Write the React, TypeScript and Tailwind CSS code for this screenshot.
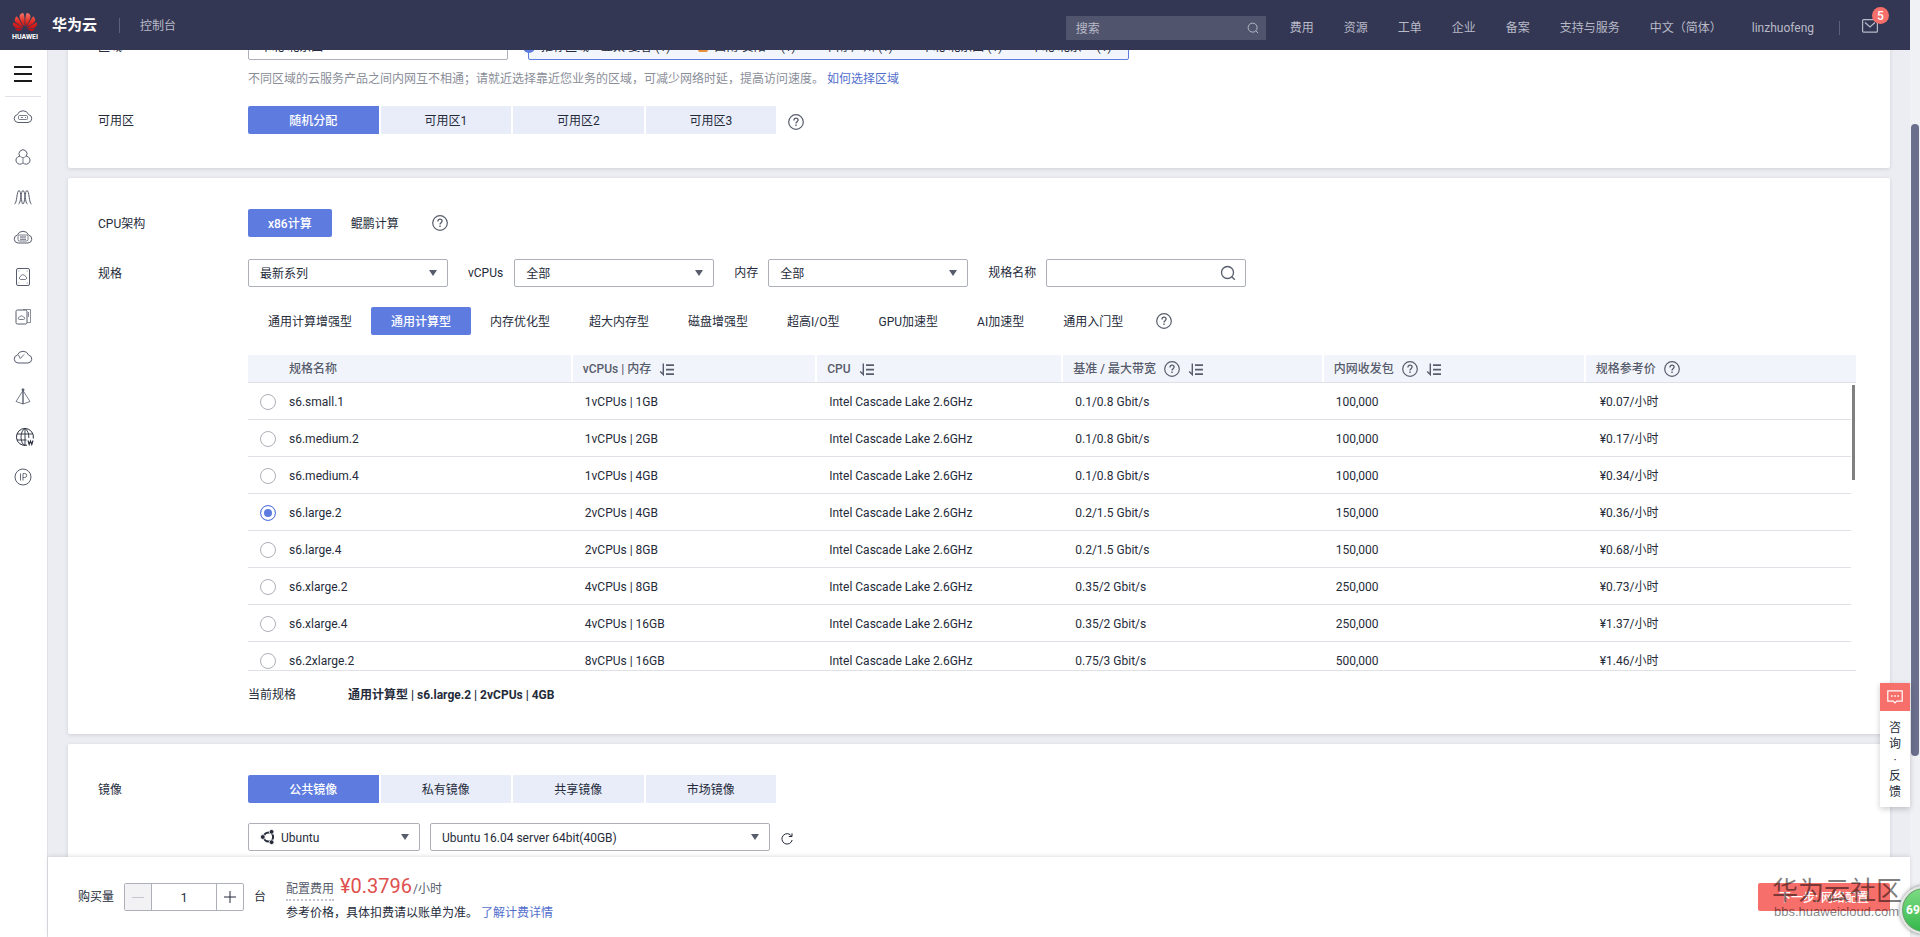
import { useState, type ReactNode } from "react";
import { SiHuawei } from "react-icons/si";

const regions = ["华南-广州 (1)", "华北-北京四 (1)", "华北-北京一 (1)"];
const zones = ["随机分配", "可用区1", "可用区2", "可用区3"];
const imageKinds = ["公共镜像", "私有镜像", "共享镜像", "市场镜像"];
const flavorKinds = [
  "通用计算增强型",
  "通用计算型",
  "内存优化型",
  "超大内存型",
  "磁盘增强型",
  "超高I/O型",
  "GPU加速型",
  "AI加速型",
  "通用入门型",
];
const flavors = [
  { name: "s6.small.1", spec: "1vCPUs | 1GB", band: "0.1/0.8 Gbit/s", pps: "100,000", price: "¥0.07/小时" },
  { name: "s6.medium.2", spec: "1vCPUs | 2GB", band: "0.1/0.8 Gbit/s", pps: "100,000", price: "¥0.17/小时" },
  { name: "s6.medium.4", spec: "1vCPUs | 4GB", band: "0.1/0.8 Gbit/s", pps: "100,000", price: "¥0.34/小时" },
  { name: "s6.large.2", spec: "2vCPUs | 4GB", band: "0.2/1.5 Gbit/s", pps: "150,000", price: "¥0.36/小时" },
  { name: "s6.large.4", spec: "2vCPUs | 8GB", band: "0.2/1.5 Gbit/s", pps: "150,000", price: "¥0.68/小时" },
  { name: "s6.xlarge.2", spec: "4vCPUs | 8GB", band: "0.35/2 Gbit/s", pps: "250,000", price: "¥0.73/小时" },
  { name: "s6.xlarge.4", spec: "4vCPUs | 16GB", band: "0.35/2 Gbit/s", pps: "250,000", price: "¥1.37/小时" },
  { name: "s6.2xlarge.2", spec: "8vCPUs | 16GB", band: "0.75/3 Gbit/s", pps: "500,000", price: "¥1.46/小时" },
];

function Help() {
  return (
    <svg className="size-4 shrink-0" viewBox="0 0 16 16" fill="none" stroke="#575d6c" role="img" aria-label="帮助">
      <circle cx="8" cy="8" r="7.3" strokeWidth="1.2" />
      <path d="M5.9 6.4C5.9 5 6.8 4.2 8 4.2s2.1.8 2.1 1.9c0 1.5-2.1 1.7-2.1 3.3" strokeWidth="1.3" />
      <path d="M8 10.6v1.4" strokeWidth="1.4" />
    </svg>
  );
}

function Sort() {
  return (
    <svg className="size-4 shrink-0" viewBox="0 0 16 16" fill="none" stroke="#575d6c" aria-hidden="true">
      <path d="M4.3 2.5v11L1.2 10.4" strokeWidth="1.4" />
      <path d="M7 4.2h8M7 8.7h8M7 13.2h8" strokeWidth="1.8" />
    </svg>
  );
}

function Magnifier({ className }: { className: string }) {
  return (
    <svg className={className} viewBox="0 0 16 16" fill="none" stroke="currentColor" strokeWidth="1.3" aria-hidden="true">
      <circle cx="7.5" cy="7.5" r="6" />
      <path d="M11.8 11.8l3 3" />
    </svg>
  );
}

function Select({ id, label, options, width, icon }: { id: string; label: string; options: string[]; width: string; icon?: ReactNode }) {
  return (
    <div className={`relative h-7 ${width}`}>
      <select
        id={id}
        aria-label={label}
        className={`h-7 w-full appearance-none rounded-xs border border-[#adb0b8] bg-white pt-0.5 pr-7 leading-4 text-[#252b3a] ${icon ? "pl-8" : "pl-[11px]"}`}
      >
        {options.map((o) => (
          <option key={o}>{o}</option>
        ))}
      </select>
      {icon}
      <svg className="pointer-events-none absolute top-[11px] right-[11px] h-[6px] w-2" viewBox="0 0 8 6" aria-hidden="true">
        <path d="M0 0h8L4 6z" fill="#575d6c" />
      </svg>
    </div>
  );
}

function Segments({ items }: { items: string[] }) {
  const [active, setActive] = useState(items[0]);
  return (
    <div className="grid w-[528px] grid-cols-4 gap-[2px]">
      {items.map((t) => (
        <button
          key={t}
          type="button"
          onClick={() => setActive(t)}
          className={`h-7 pt-0.5 ${t === active ? "rounded-l-xs bg-[#5e7ce0] font-medium text-white" : "bg-[#e9edfa] text-[#252b3a]"}`}
        >
          {t}
        </button>
      ))}
    </div>
  );
}

function Pills({ items, initial }: { items: string[]; initial: string }) {
  const [active, setActive] = useState(initial);
  return (
    <div className="flex">
      {items.map((t) => (
        <button
          key={t}
          type="button"
          onClick={() => setActive(t)}
          className={`h-7 rounded-xs px-5 pt-0.5 not-first:-ml-px ${t === active ? "bg-[#5e7ce0] font-medium text-white" : "text-[#252b3a]"}`}
        >
          {t}
        </button>
      ))}
    </div>
  );
}

function Row({ label, children }: { label: string; children: ReactNode }) {
  return (
    <div className="flex">
      <div className="w-[150px] shrink-0 pt-px leading-7">{label}</div>
      <div className="min-w-0 flex-1">{children}</div>
    </div>
  );
}

const sideIcons: { name: string; art: ReactNode }[] = [
  {
    name: "弹性云服务器",
    art: (
      <>
        <path d="M5 15.5a4 4 0 0 1-.6-7.9A6 6 0 0 1 15.600 7.6a4 4 0 0 1-.6 7.900z" />
        <rect x="5.500" y="8.500" width="9" height="4" rx="1" strokeWidth=".8" />
        <path d="M8 10.500h2M12 10.500h1" strokeWidth=".8" />
      </>
    ),
  },
  {
    name: "弹性伸缩",
    art: (
      <>
        <path d="M6.800 9.200a4 4 0 1 1 6.400 0a4 4 0 1 1-3.200 6.600a4 4 0 1 1-3.200-6.600z" />
        <path d="M7.200 9.400c1 .9 1.800 1.200 2.800 1.200s1.800-.3 2.800-1.200M10 10.600v5" strokeWidth=".8" />
      </>
    ),
  },
  {
    name: "负载均衡",
    art: <path d="M1.500 17C4 17 3.600 3.500 6 3.500S8 17 10 17s1.600-13.500 4-13.500S16 17 18.500 17M5.500 17C8 17 7.600 3.500 10 3.500S12 17 14.500 17" />,
  },
  {
    name: "裸金属服务器",
    art: (
      <>
        <path d="M5 16a4 4 0 0 1-.6-7.900A6 6 0 0 1 15.600 8.100 4 4 0 0 1 15 16z" />
        <rect x="5" y="8" width="10" height="6" rx="1.500" strokeWidth=".8" />
        <path d="M7 10h6M7 12.200h6" />
      </>
    ),
  },
  {
    name: "云硬盘",
    art: (
      <>
        <rect x="3.500" y="1.500" width="13" height="17" rx="1.500" />
        <path d="M7.500 12.500a1.500 1.500 0 0 1 0-2.900 2.600 2.600 0 0 1 5 0 1.500 1.500 0 0 1 0 2.900z" strokeWidth=".8" />
        <path d="M5.500 4h.8M13.700 4h.8M5.500 16h.8M13.700 16h.8" strokeWidth=".8" />
      </>
    ),
  },
  {
    name: "云备份",
    art: (
      <>
        <rect x="3" y="3" width="11" height="14" rx="1.500" />
        <path d="M6.500 12.500a1.200 1.200 0 0 1 0-2.400 2.200 2.200 0 0 1 4 0 1.200 1.200 0 0 1 0 2.400z" strokeWidth=".8" />
        <path d="M10 2.500h7.500v13H14M15.500 5v5" strokeWidth=".7" />
      </>
    ),
  },
  {
    name: "虚拟私有云",
    art: (
      <>
        <path d="M5 16a4 4 0 0 1-.6-7.900A6 6 0 0 1 15.600 8.100 4 4 0 0 1 15 16z" />
        <path d="M5.500 8l1.800 3.500L11 7.500" strokeWidth=".9" />
      </>
    ),
  },
  {
    name: "云监控",
    art: (
      <>
        <path d="M10 3.500L3 14.500l7 2.500 7-2.500z" strokeWidth=".8" />
        <path d="M10 3v14" strokeWidth="1.400" />
        <circle cx="10" cy="2.800" r="1" fill="currentColor" />
      </>
    ),
  },
  {
    name: "域名服务",
    art: (
      <g stroke="#252b3a">
        <path d="M20.300 11.500A8.500 8.500 0 1 0 14 18.200" />
        <path d="M12 18.500c-5.300-2-5.300-14.600 0-17M12 1.500c2.900 1.700 4 5.500 3.800 9.500M4 7h15.500M4 13h9.500M12 1.500v17" strokeWidth=".9" />
        <path d="M15 13.500l1.200 4 1.300-3.500 1.300 3.500 1.200-4" strokeWidth="1.100" />
      </g>
    ),
  },
  {
    name: "弹性公网IP",
    art: (
      <>
        <circle cx="10" cy="10" r="8" />
        <path d="M7.500 6.500v7M10 13.500v-7h1.700a2 2 0 0 1 0 4H10" strokeWidth=".9" />
      </>
    ),
  },
];

function Header() {
  return (
    <header className="flex h-[50px] shrink-0 items-center justify-between bg-[#343753] pr-8 pl-3 text-[#b8bac8]">
      <div className="flex items-center">
        <a href="#home" className="flex items-center gap-3.5">
          <span className="flex w-[26px] flex-col items-center">
            <svg className="size-0" aria-hidden="true">
              <defs>
                <linearGradient id="petal" x1="0" y1="0" x2="0" y2="1">
                  <stop offset="0" stopColor="#f4766a" />
                  <stop offset="0.5" stopColor="#e0281f" />
                  <stop offset="1" stopColor="#c00c14" />
                </linearGradient>
              </defs>
            </svg>
            <SiHuawei className="h-6 w-[26px]" fill="url(#petal)" />
            <span className="text-[7px] leading-[7px] font-bold text-white">HUAWEI</span>
          </span>
          <span className="text-[15px] font-bold text-white">华为云</span>
        </a>
        <span className="mr-5 ml-[22px] h-[15px] w-px bg-[#5d6079]" />
        <a href="#console" className="pt-0.5">
          控制台
        </a>
      </div>
      <div className="flex items-center pt-1.5">
        <label className="mr-6 flex h-6 w-[200px] items-center bg-[#51546d] pr-[7px] pl-2.5">
          <input type="search" aria-label="搜索" placeholder="搜索" className="min-w-0 flex-1 bg-transparent pt-0.5 outline-none placeholder:text-[#b8bac8]" />
          <Magnifier className="size-3" />
        </label>
        <nav className="flex gap-[30px]">
          {["费用", "资源", "工单", "企业", "备案", "支持与服务", "中文（简体）", "linzhuofeng"].map((t) => (
            <a key={t} href="#menu">
              {t}
            </a>
          ))}
        </nav>
        <span className="mr-[22px] ml-[25px] h-[14px] w-px bg-[#5d6079]" />
        <a href="#messages" aria-label="消息" className="relative mb-1 block">
          <svg className="h-[14px] w-4" viewBox="0 0 16 14" fill="none" stroke="currentColor" strokeWidth="1.2">
            <rect x=".6" y=".6" width="14.800" height="12.600" rx="1" />
            <path d="M3 3.500l5 4.500 5-4.500" />
          </svg>
          <span className="absolute -top-3 left-2.5 flex size-[17px] items-center justify-center rounded-full bg-[#f66f6a] font-medium text-white">5</span>
        </a>
      </div>
    </header>
  );
}

function Sidebar() {
  return (
    <nav className="flex w-12 shrink-0 flex-col items-center border-r border-[#dfe1e6] bg-white pr-px text-[#575d6c]">
      <button type="button" aria-label="菜单" className="flex h-[47px] w-9 flex-col items-center justify-center gap-[5px] border-b border-[#dfe1e6] pt-px">
        <span className="h-[2px] w-[18px] bg-[#191919]" />
        <span className="h-[2px] w-[18px] bg-[#191919]" />
        <span className="h-[2px] w-[18px] bg-[#191919]" />
      </button>
      <div className="flex flex-col">
        {sideIcons.map((i) => (
          <a key={i.name} href="#service" aria-label={i.name} className="flex h-10 items-center">
            <svg className="size-5 overflow-visible" viewBox="0 0 20 20" fill="none" stroke="currentColor">
              {i.art}
            </svg>
          </a>
        ))}
      </div>
    </nav>
  );
}

function HeadCell({ children, className }: { children: ReactNode; className: string }) {
  return (
    <th scope="col" className={`group h-7 border-b border-[#dfe1e6] p-0 text-left font-medium text-[#575d6c] ${className}`}>
      <div className="flex h-[27px] items-center gap-2 border-r-2 border-white pl-2.5 group-last:border-r-0">{children}</div>
    </th>
  );
}

function FlavorTable() {
  const [picked, setPicked] = useState("s6.large.2");
  return (
    <div className="relative mt-5 h-[316px] overflow-hidden border-b border-[#dfe1e6]">
      <table className="w-full table-fixed border-separate border-spacing-0">
        <thead className="bg-[#f2f4fb]">
          <tr>
            <th scope="col" className="h-7 w-[20.2%] border-b border-[#dfe1e6] p-0 text-left font-medium text-[#575d6c]">
              <div className="flex h-[27px] items-center border-r-2 border-white pl-[41px]">规格名称</div>
            </th>
            <HeadCell className="w-[15.2%]">vCPUs | 内存 <Sort /></HeadCell>
            <HeadCell className="w-[15.3%]">CPU <Sort /></HeadCell>
            <HeadCell className="w-[16.2%]">基准 / 最大带宽 <Help /> <Sort /></HeadCell>
            <HeadCell className="w-[16.3%]">内网收发包 <Help /> <Sort /></HeadCell>
            <HeadCell className="w-[16.8%]">规格参考价 <Help /></HeadCell>
          </tr>
        </thead>
        <tbody>
          {flavors.map((f) => (
            <tr key={f.name} className="[&>td]:h-[37px] [&>td]:border-b [&>td]:border-[#dfe1e6] [&>td]:pt-px [&>td]:pr-0 [&>td]:pb-0">
              <td className="pl-3">
                <label className="flex items-center gap-[13px]">
                  <input
                    type="radio"
                    name="flavor"
                    checked={picked === f.name}
                    onChange={() => setPicked(f.name)}
                    className="size-4 appearance-none rounded-full border border-[#adb0b8] checked:border-[#5e7ce0] checked:bg-[#5e7ce0] checked:shadow-[inset_0_0_0_3px_white]"
                  />
                  {f.name}
                </label>
              </td>
              <td className="pl-3">{f.spec}</td>
              <td className="pl-3">Intel Cascade Lake 2.6GHz</td>
              <td className="pl-3">{f.band}</td>
              <td className="pl-3">{f.pps}</td>
              <td className="pl-3.5">{f.price}</td>
            </tr>
          ))}
        </tbody>
      </table>
      <div className="absolute top-7 right-0 bottom-0 w-[5px] bg-white pt-0.5 pl-px">
        <div className="h-[95px] w-[3px] bg-[#808080]" />
      </div>
    </div>
  );
}

const card = "rounded-xs bg-white px-[30px] shadow-[0_1px_4px_rgba(0,0,0,0.12)]";

export default function App() {
  const [count, setCount] = useState(1);
  return (
    <div className="flex h-screen overflow-hidden bg-[#ecedf3] font-['Roboto','Noto_Sans_CJK_SC',sans-serif] text-xs leading-4 text-[#252b3a]">
      <div className="relative flex min-w-0 flex-1 flex-col">
        <Header />
        <div className="flex min-h-0 flex-1">
          <Sidebar />
          <div className="flex min-w-0 flex-1 flex-col">
            <main className="min-h-0 flex-1 overflow-hidden px-5">
              <section className={`-mt-12 pt-[30px] pb-[33px] ${card}`}>
                <Row label="区域">
                  <div className="flex gap-5">
                    <Select id="region" label="区域" options={["华北-北京四"]} width="w-[260px]" />
                    <div className="flex h-7 items-center rounded-xs border border-[#5e7ce0] bg-[#f2f5fc] pt-0.5 pr-4">
                      <span className="-ml-1.5 size-3 rounded-full bg-[#5e7ce0]" />
                      <span className="ml-1.5">推荐区域</span>
                      <span className="ml-3">亚太-曼谷 (1)</span>
                      <span className="mr-1.5 ml-7 size-2.5 rounded-b-xs bg-[#e8913a]" />
                      <span>西南-贵阳一 (1)</span>
                      {regions.map((r) => (
                        <span key={r} className="ml-7">
                          {r}
                        </span>
                      ))}
                    </div>
                  </div>
                  <p className="mt-[11px] text-[#8a8e99]">
                    不同区域的云服务产品之间内网互不相通；请就近选择靠近您业务的区域，可减少网络时延，提高访问速度。
                    <a href="#region-help" className="ml-[3px] text-[#526ecc]">
                      如何选择区域
                    </a>
                  </p>
                </Row>
                <div className="mt-[19px]">
                  <Row label="可用区">
                    <div className="flex items-end gap-3">
                      <Segments items={zones} />
                      <span className="pb-1">
                        <Help />
                      </span>
                    </div>
                  </Row>
                </div>
              </section>

              <section className={`mt-2.5 pt-[31px] pb-[31px] ${card}`}>
                <Row label="CPU架构">
                  <div className="flex items-center gap-[13px]">
                    <Pills items={["x86计算", "鲲鹏计算"]} initial="x86计算" />
                    <Help />
                  </div>
                </Row>
                <div className="mt-[21px]">
                  <Row label="规格">
                    <div className="flex items-center">
                      <Select id="series" label="系列" options={["最新系列"]} width="w-[200px]" />
                      <label htmlFor="vcpus" className="mr-[11px] ml-5">
                        vCPUs
                      </label>
                      <Select id="vcpus" label="vCPUs" options={["全部"]} width="w-[200px]" />
                      <label htmlFor="memory" className="mr-2.5 ml-5">
                        内存
                      </label>
                      <Select id="memory" label="内存" options={["全部"]} width="w-[200px]" />
                      <label htmlFor="flavor-name" className="mr-2.5 ml-5">
                        规格名称
                      </label>
                      <div className="flex h-7 w-[200px] items-center rounded-xs border border-[#adb0b8] px-[9px]">
                        <input id="flavor-name" type="text" className="min-w-0 flex-1 outline-none" />
                        <Magnifier className="size-4 text-[#575d6c]" />
                      </div>
                    </div>
                    <div className="mt-5 flex items-center gap-[13px]">
                      <Pills items={flavorKinds} initial="通用计算型" />
                      <Help />
                    </div>
                    <div className="mr-1">
                      <FlavorTable />
                    </div>
                    <div className="mt-4 flex">
                      <span className="w-[100px]">当前规格</span>
                      <span className="font-bold">通用计算型 | s6.large.2 | 2vCPUs | 4GB</span>
                    </div>
                  </Row>
                </div>
              </section>

              <section className={`mt-2.5 pt-[31px] pb-[30px] ${card}`}>
                <Row label="镜像">
                  <Segments items={imageKinds} />
                  <div className="mt-5 flex items-center gap-2.5">
                    <Select
                      id="os"
                      label="操作系统"
                      options={["Ubuntu"]}
                      width="w-[172px]"
                      icon={
                        <svg className="pointer-events-none absolute top-1.5 left-3 size-4" viewBox="0 0 16 16" aria-hidden="true">
                          <circle cx="8.500" cy="8" r="4.600" fill="none" stroke="#252b3a" strokeWidth="2" />
                          <g fill="#252b3a" stroke="#fff" strokeWidth=".8">
                            <circle cx="2.800" cy="8" r="2.400" />
                            <circle cx="11.600" cy="2.800" r="2.400" />
                            <circle cx="11.600" cy="13.200" r="2.400" />
                          </g>
                        </svg>
                      }
                    />
                    <Select id="image" label="镜像版本" options={["Ubuntu 16.04 server 64bit(40GB)"]} width="w-[340px]" />
                    <button type="button" aria-label="刷新" className="pt-1">
                      <svg className="size-3.5" viewBox="0 0 14 14" fill="none" stroke="#252b3a">
                        <path d="M11.600 4.200A5.200 5.200 0 1 0 12.200 8M12 1.300v3.200H8.800" />
                      </svg>
                    </button>
                  </div>
                </Row>
              </section>
            </main>

            <footer className="z-10 flex h-20 shrink-0 items-center bg-white pr-5 pl-[30px] shadow-[0_-1px_4px_rgba(0,0,0,0.12)]">
              <label htmlFor="count" className="mr-2.5">
                购买量
              </label>
              <div className="flex h-7 w-[120px] items-center rounded-xs border border-[#adb0b8]">
                <button type="button" aria-label="减少" disabled className="flex h-full w-[27px] items-center justify-center border-r border-[#adb0b8] bg-[#f2f2f4]">
                  <span className="h-px w-3 bg-[#c3c6cf]" />
                </button>
                <input
                  id="count"
                  type="text"
                  value={count}
                  onChange={(e) => setCount(Number(e.target.value) || 1)}
                  className="min-w-0 flex-1 pt-0.5 text-center outline-none"
                />
                <button
                  type="button"
                  aria-label="增加"
                  onClick={() => setCount(count + 1)}
                  className="flex h-full w-[27px] items-center justify-center border-l border-[#adb0b8]"
                >
                  <svg className="size-3" viewBox="0 0 12 12" stroke="#252b3a" aria-hidden="true">
                    <path d="M0 6h12M6 0v12" />
                  </svg>
                </button>
              </div>
              <span className="ml-2.5">台</span>
              <div className="ml-5">
                <div className="flex items-baseline">
                  <span className="mr-1.5 border-b-2 border-dotted border-[#c3c6cf] pb-0.5 text-[#575d6c]">配置费用</span>
                  <span className="text-xl leading-6 text-[#de504e]">¥0.3796</span>
                  <span className="ml-px text-[#575d6c]">/小时</span>
                </div>
                <p className="mt-1">
                  参考价格，具体扣费请以账单为准。
                  <a href="#billing" className="ml-[3px] text-[#526ecc]">
                    了解计费详情
                  </a>
                </p>
              </div>
              <button type="button" className="ml-auto h-7 w-[132px] rounded-xs bg-[#f66f6a] pt-0.5 font-medium text-white">
                下一步: 网络配置
              </button>
            </footer>
          </div>
        </div>

        <aside className="absolute right-0 bottom-[130px] z-10 w-[30px] bg-white shadow-[0_2px_6px_rgba(0,0,0,0.2)]">
          <button type="button" aria-label="在线咨询" className="flex h-7 w-full items-center justify-center bg-[#f66f6a]">
            <svg className="size-4" viewBox="0 0 16 16" fill="none" stroke="#fff" strokeWidth="1.200">
              <path d="M.8 1.800h14.400v10.400H9.800L8 14l-1.800-1.800H.8z" />
              <path d="M4 7h1.600M7.200 7h1.600M10.400 7H12" strokeWidth="1.400" />
            </svg>
          </button>
          <a href="#feedback" className="flex h-24 flex-col items-center justify-center pt-0.5">
            {["咨", "询", "·", "反", "馈"].map((c) => (
              <span key={c}>{c}</span>
            ))}
          </a>
        </aside>
      </div>

      <div className="w-2.5 shrink-0 bg-[#f0f1f5] pt-[124px] pl-px">
        <div className="h-[632px] w-2 rounded-full bg-[#6b6f8d]" />
      </div>

      <div className="pointer-events-none absolute right-[18px] bottom-[17px] z-20 w-[130px] text-black/50">
        <div className="text-[26px] leading-[26px]">华为云社区</div>
        <div className="pl-0.5 font-['Liberation_Sans',sans-serif] text-[13px]">bbs.huaweicloud.com</div>
      </div>
      <div className="absolute -right-7 bottom-[3px] z-20 flex size-12 items-center rounded-full border-2 border-[#e4e6e4] bg-linear-to-b from-[#7ddc84] to-[#2fb84a] pl-1 font-bold text-white shadow-[0_0_4px_rgba(0,0,0,0.5)] ring-1 ring-[#6f9a73] ring-inset">
        69
      </div>
    </div>
  );
}
